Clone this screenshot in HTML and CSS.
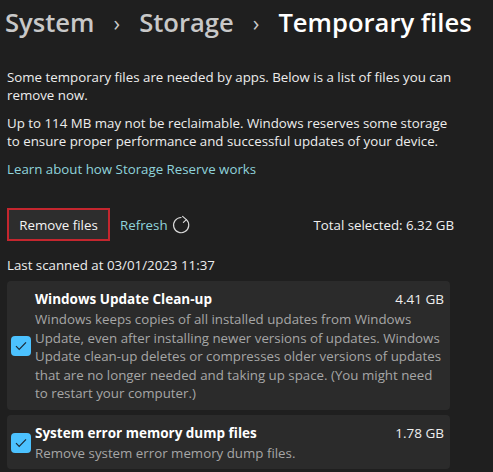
FILE: index.html
```html
<!DOCTYPE html>
<html lang="en">
<head>
    <meta charset="UTF-8">
    <meta name="viewport" content="width=device-width, initial-scale=1.0">
    <title>Temporary files</title>
    <link rel="stylesheet" href="styles.css">
</head>
<body>
    <!-- Breadcrumb header -->
    <header class="breadcrumb">
        <span class="crumb">System</span>
        <span class="chevron">&#8250;</span>
        <span class="crumb">Storage</span>
        <span class="chevron">&#8250;</span>
        <span class="crumb current">Temporary files</span>
    </header>

    <main class="page">
        <p class="intro">Some temporary files are needed by apps. Below is a list of files you can remove now.</p>
        <p class="intro">Up to 114 MB may not be reclaimable. Windows reserves some storage to ensure proper performance and successful updates of your device.</p>
        <a class="link" href="#">Learn about how Storage Reserve works</a>

        <!-- Actions row -->
        <div class="actions">
            <button class="remove-btn">Remove files</button>
            <a class="refresh" href="#">Refresh
                <svg width="20" height="20" viewBox="0 0 20 20" fill="none" stroke="#d8d8d8" stroke-width="1.2" stroke-linecap="round" stroke-linejoin="round">
                    <path d="M14.4 4.6 A7.6 7.6 0 1 1 9 2.5"/>
                    <path d="M10.6 1.4 L14.4 4.6 L11.4 7.4"/>
                </svg>
            </a>
            <span class="total">Total selected: 6.32 GB</span>
        </div>

        <div class="scanned">Last scanned at 03/01/2023 11:37</div>

        <!-- File categories -->
        <div class="item">
            <span class="check">
                <svg width="12" height="10" viewBox="0 0 12 10" fill="none" stroke="#1b2a36" stroke-width="1.2"><path d="M1 5.2 L4.2 8.4 L11 1.4"/></svg>
            </span>
            <div class="item-body">
                <div class="item-head">
                    <span class="item-title">Windows Update Clean-up</span>
                    <span class="item-size">4.41 GB</span>
                </div>
                <div class="item-desc">Windows keeps copies of all installed updates from Windows<br>Update, even after installing newer versions of updates. Windows<br>Update clean-up deletes or compresses older versions of updates<br>that are no longer needed and taking up space. (You might need<br>to restart your computer.)</div>
            </div>
        </div>

        <div class="item">
            <span class="check">
                <svg width="12" height="10" viewBox="0 0 12 10" fill="none" stroke="#1b2a36" stroke-width="1.2"><path d="M1 5.2 L4.2 8.4 L11 1.4"/></svg>
            </span>
            <div class="item-body">
                <div class="item-head">
                    <span class="item-title">System error memory dump files</span>
                    <span class="item-size">1.78 GB</span>
                </div>
                <div class="item-desc">Remove system error memory dump files.</div>
            </div>
        </div>
    </main>
</body>
</html>
```

FILE: styles.css
```css
body {
    margin: 0;
    background: #1f1f1f;
    color: #f2f2f2;
    font-family: "Open Sans", "Noto Sans", sans-serif;
    overflow: hidden;
}

/* Breadcrumb */
.breadcrumb {
    display: flex;
    align-items: center;
    height: 44px;
    padding-left: 5px;
    font-size: 25.6px;
    font-weight: 600;
    white-space: nowrap;
}

.crumb {
    color: #c8c8c8;
}

.crumb.current {
    color: #ffffff;
}

.chevron {
    color: #c8c8c8;
    font-size: 22px;
    font-weight: 400;
    margin: 0 19px;
}

/* Content */
.page {
    padding: 0 7px;
    width: 447px;
}

.intro {
    margin: 0 0 10px;
    width: 448px;
    font-size: 13.3px;
    line-height: 18px;
    color: #ededed;
}

.page .intro:first-child {
    margin-top: 24px;
}

.link {
    display: block;
    font-size: 13.3px;
    line-height: 18px;
    color: #8fd3db;
    text-decoration: none;
}

/* Actions row */
.actions {
    display: flex;
    align-items: center;
    margin-top: 30px;
    height: 33px;
}

.remove-btn {
    background: #2d2d2d;
    color: #f4f4f4;
    font-family: inherit;
    font-size: 13.3px;
    border: 2px solid #c4262e;
    height: 33px;
    width: 103px;
    padding: 0;
}

.refresh {
    display: flex;
    align-items: center;
    gap: 4px;
    margin-left: 10px;
    font-size: 13.3px;
    color: #8fd3db;
    text-decoration: none;
}

.total {
    margin-left: auto;
    font-size: 13.3px;
    color: #f0f0f0;
}

.scanned {
    margin-top: 15px;
    font-size: 13.3px;
    line-height: 18px;
    color: #ededed;
}

/* Items */
.item {
    display: flex;
    align-items: center;
    width: 443px;
    box-sizing: border-box;
    background: #2b2b2b;
    border-radius: 4px;
    padding: 9px 6px 7px 4px;
    margin-top: 7px;
    margin-bottom: 5px;
}

.item + .item {
    margin-top: 0;
}

.check {
    flex: none;
    display: flex;
    align-items: center;
    justify-content: center;
    width: 20px;
    height: 20px;
    border-radius: 4px;
    background: #4cc2ff;
    margin-right: 4px;
}

.item-body {
    flex: 1;
    min-width: 0;
}

.item-head {
    display: flex;
    justify-content: space-between;
    line-height: 18px;
    font-size: 13.5px;
}

.item-title {
    font-weight: 700;
    color: #ffffff;
}

.item-size {
    color: #eeeeee;
}

.item-desc {
    margin-top: 2px;
    font-size: 13.3px;
    line-height: 18.5px;
    color: #a6a6a6;
    white-space: nowrap;
}
```
